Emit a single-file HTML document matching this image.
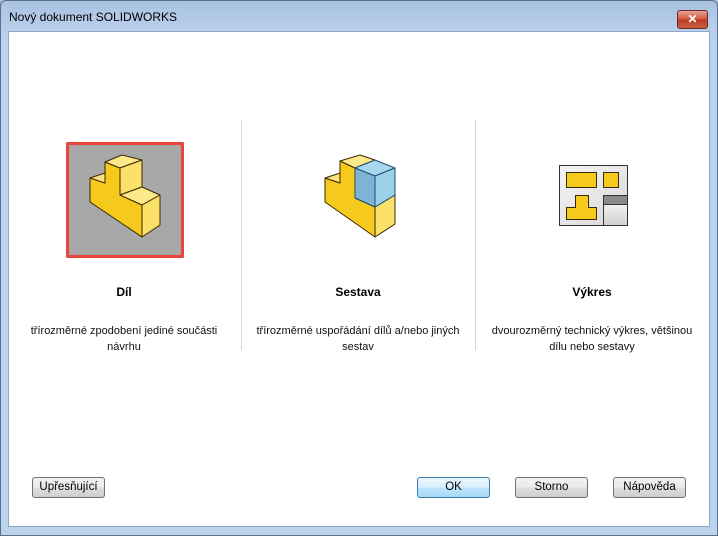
<!DOCTYPE html>
<html><head><meta charset="utf-8">
<style>
html,body{margin:0;padding:0;}
body{width:718px;height:536px;position:relative;overflow:hidden;font-family:"Liberation Sans",sans-serif;
background:linear-gradient(#a9c2e0,#bcd3ee 40px,#bcd3ee);}
.frame{position:absolute;left:0;top:0;width:716px;height:534px;border:1px solid #5a6f8a;border-radius:6px 6px 0 0;}
.title{position:absolute;left:9px;top:10px;font-size:12px;color:#000;}
.close{position:absolute;left:677px;top:10px;width:29px;height:17px;border:1px solid #6b2a22;border-radius:3px;
background:linear-gradient(#e8a095,#d2553f 50%,#b83a25 51%,#c8603f);color:#fff;font-size:12px;font-weight:bold;text-align:center;line-height:17px;}
.content{position:absolute;left:8px;top:31px;width:702px;height:496px;background:#fff;border:1px solid #8fa7c6;box-sizing:border-box;}
.div{position:absolute;top:120px;width:1px;height:230px;background:#d6d6d6;}
.h{position:absolute;font-size:12px;font-weight:bold;text-align:center;width:200px;}
.d{position:absolute;font-size:11px;text-align:center;width:230px;line-height:16px;color:#111;}
.btn{position:absolute;top:477px;height:21px;box-sizing:border-box;border:1px solid #707070;border-radius:3px;
background:linear-gradient(#f2f2f2,#ebebeb 50%,#dddddd 51%,#cfcfcf);font-size:11.5px;text-align:center;line-height:19px;}
.ok{border-color:#3c7fb1;background:linear-gradient(#eaf6fd,#d9f0fc 50%,#bee6fd 51%,#a7d9f5);}
</style></head><body>
<div class="frame"></div>
<div class="title">Nový dokument SOLIDWORKS</div>
<div class="close">✕</div>
<div class="content"></div>
<div class="div" style="left:241px"></div>
<div class="div" style="left:475px"></div>
<svg width="718" height="536" style="position:absolute;left:0;top:0" stroke="#3a2800" stroke-width="1" stroke-linejoin="round">
<rect x="67.5" y="143.5" width="115" height="113" fill="#a8a8a8" stroke="#e8453c" stroke-width="3"/>
<g transform="translate(66,142)">
<polygon points="24,36 39,41 39,20 54,26 54,53 76,63 76,95 24,60" fill="#f6c91d"/>
<polygon points="24,36 39,31 39,41" fill="#fbe27a"/>
<polygon points="39,20 56,13 76,18 54,26" fill="#fde88a"/>
<polygon points="54,26 76,18 76,45 54,53" fill="#fbe06a"/>
<polygon points="54,53 76,45 94,53 76,63" fill="#fde88a"/>
<polygon points="76,63 94,53 94,83 76,95" fill="#fbe06a"/>
</g>
<polygon points="325,178 340,183 340,161 355,168 355,198 375,207 375,237 325,202" fill="#f6c91d"/>
<polygon points="325,178 340,173 340,183" fill="#fbe27a"/>
<polygon points="340,161 360,155 375,160 355,168" fill="#fde88a"/>
<polygon points="375,207 395,195 395,224 375,237" fill="#fbe06a"/>
<g stroke="#1d4f73">
<polygon points="355,168 375,160 395,168 375,176" fill="#a9d7ee"/>
<polygon points="355,168 375,176 375,207 355,198" fill="#7fb3d3"/>
<polygon points="375,176 395,168 395,195 375,207" fill="#9ccfe8"/>
</g>
<defs><linearGradient id="g1" x1="0" y1="0" x2="1" y2="1"><stop offset="0" stop-color="#f4f4f4"/><stop offset="1" stop-color="#d8d8d8"/></linearGradient>
<linearGradient id="g2" x1="0" y1="0" x2="0" y2="1"><stop offset="0" stop-color="#fff"/><stop offset="1" stop-color="#d0d0d0"/></linearGradient></defs>
<rect x="559.5" y="165.5" width="68" height="60" fill="url(#g1)" stroke="#333"/>
<rect x="566.5" y="172.5" width="30" height="15" fill="#f6c91d"/>
<rect x="603.5" y="172.5" width="15" height="15" fill="#f6c91d"/>
<polygon points="575.5,195.5 588.5,195.5 588.5,207.5 596.5,207.5 596.5,219.5 566.5,219.5 566.5,207.5 575.5,207.5" fill="#f6c91d"/>
<rect x="603.5" y="195.5" width="24" height="30" fill="url(#g2)" stroke="#333"/>
<rect x="603.5" y="195.5" width="24" height="9" fill="#8a8a8a" stroke="#333"/>
</svg>
<div class="h" style="left:24px;top:285px">Díl</div>
<div class="h" style="left:258px;top:285px">Sestava</div>
<div class="h" style="left:492px;top:285px">Výkres</div>
<div class="d" style="left:9px;top:323px">třírozměrné zpodobení jediné součásti<br>návrhu</div>
<div class="d" style="left:243px;top:323px">třírozměrné uspořádání dílů a/nebo jiných<br>sestav</div>
<div class="d" style="left:477px;top:323px">dvourozměrný technický výkres, většinou<br>dílu nebo sestavy</div>
<div class="btn" style="left:32px;width:73px">Upřesňující</div>
<div class="btn ok" style="left:417px;width:73px">OK</div>
<div class="btn" style="left:515px;width:73px">Storno</div>
<div class="btn" style="left:613px;width:73px">Nápověda</div>
</body></html>
